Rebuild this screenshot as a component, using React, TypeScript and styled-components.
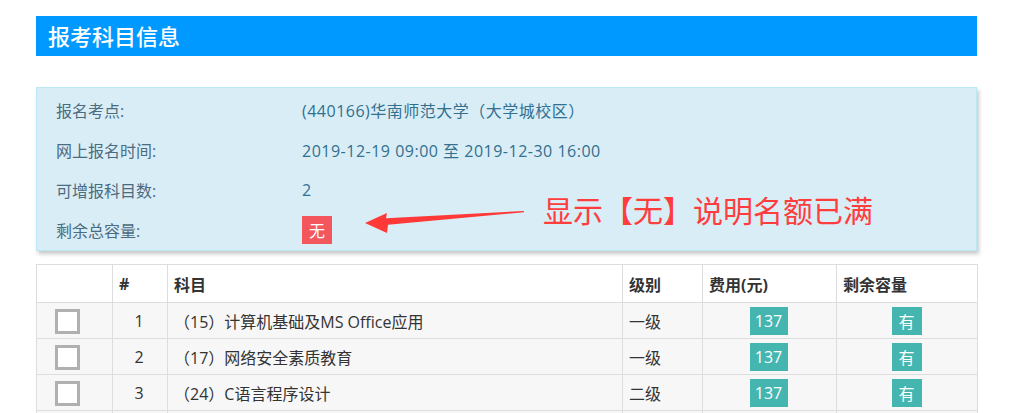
import React from "react";
import styled, { createGlobalStyle } from "styled-components";

const Global = createGlobalStyle`
  html, body { margin: 0; padding: 0; background: #fff; }
  body { font-family: "Open Sans", "Noto Sans CJK SC", sans-serif; color: #333; }
`;

const Page = styled.div`
  width: 941px;
  padding: 16px 0 0 36px;
`;

const TitleBar = styled.div`
  height: 40px;
  line-height: 40px;
  background: #0099ff;
  color: #fff;
  font-size: 22px;
  font-weight: 500;
  padding-left: 12px;
`;

const Panel = styled.div`
  position: relative;
  margin-top: 31px;
  background: #d9edf7;
  border: 1px solid #bce8f1;
  padding: 2px 19px 0 19px;
  height: 160px;
  box-shadow: 2px 3px 4px rgba(0, 0, 0, 0.22);
`;

const InfoRow = styled.div`
  display: grid;
  grid-template-columns: 246px 1fr;
  align-items: center;
  height: 40px;
  font-size: 16px;
`;

const Label = styled.span`
  color: #4b6b80;
`;

const Value = styled.span`
  color: #31708f;
  letter-spacing: 0.5px;
`;

const Badge = styled.span<{ $bg: string; $w: number }>`
  display: inline-flex;
  align-items: center;
  justify-content: center;
  width: ${(p) => p.$w}px;
  height: 28px;
  background: ${(p) => p.$bg};
  color: #fff;
  font-size: 16px;
  vertical-align: middle;
`;

const Note = styled.div`
  position: absolute;
  left: 506px;
  top: 108px;
  font-size: 30px;
  line-height: 30px;
  color: #ff3d3d;
  white-space: nowrap;
`;

const Arrow = styled.svg`
  position: absolute;
  left: 323px;
  top: 117px;
`;

const Table = styled.table`
  margin-top: 13px;
  width: 941px;
  table-layout: fixed;
  border-collapse: collapse;
  font-size: 16px;
`;

const Th = styled.th`
  height: 37px;
  padding: 0 6px;
  border: 1px solid #ddd;
  text-align: left;
  font-weight: bold;
  color: #333;
  background: #fff;
`;

const Tr = styled.tr`
  background: #f7f7f7;
`;

const Td = styled.td<{ $align?: string; $pl?: number; $pr?: number }>`
  height: 35px;
  padding: 0 ${(p) => p.$pr ?? 6}px 0 ${(p) => p.$pl ?? 6}px;
  border: 1px solid #ddd;
  text-align: ${(p) => p.$align ?? "left"};
  vertical-align: middle;
  color: #333;
  white-space: nowrap;
`;

const Check = styled.span`
  display: inline-block;
  box-sizing: border-box;
  width: 25px;
  height: 25px;
  border: 3px solid #b0b0b0;
  background: #fff;
  vertical-align: middle;
  margin-top: 2px;
`;

const rows = [
  { n: 1, name: "（15）计算机基础及MS Office应用", level: "一级" },
  { n: 2, name: "（17）网络安全素质教育", level: "一级" },
  { n: 3, name: "（24）C语言程序设计", level: "二级" },
];

export default function App() {
  return (
    <Page>
      <Global />
      <TitleBar>报考科目信息</TitleBar>
      <Panel>
        <InfoRow>
          <Label>报名考点:</Label>
          <Value>(440166)华南师范大学（大学城校区）</Value>
        </InfoRow>
        <InfoRow>
          <Label>网上报名时间:</Label>
          <Value>2019-12-19 09:00 至 2019-12-30 16:00</Value>
        </InfoRow>
        <InfoRow>
          <Label>可增报科目数:</Label>
          <Value>2</Value>
        </InfoRow>
        <InfoRow>
          <Label>剩余总容量:</Label>
          <span>
            <Badge $bg="#f3565d" $w={30}>无</Badge>
          </span>
        </InfoRow>
        <Arrow width="170" height="35" viewBox="0 0 170 35">
          <polygon
            points="5,18 27,8 26,13.3 164,6 164,7.2 28,19.8 27,28"
            fill="#ff3838"
          />
        </Arrow>
        <Note>显示【无】说明名额已满</Note>
      </Panel>
      <Table>
        <colgroup>
          <col style={{ width: 76 }} />
          <col style={{ width: 55 }} />
          <col style={{ width: 455 }} />
          <col style={{ width: 80 }} />
          <col style={{ width: 134 }} />
          <col style={{ width: 141 }} />
        </colgroup>
        <thead>
          <tr>
            <Th></Th>
            <Th>#</Th>
            <Th>科目</Th>
            <Th>级别</Th>
            <Th>费用(元)</Th>
            <Th>剩余容量</Th>
          </tr>
        </thead>
        <tbody>
          {rows.map((r) => (
            <Tr key={r.n}>
              <Td $pl={18}>
                <Check />
              </Td>
              <Td $align="center" $pr={8}>{r.n}</Td>
              <Td>{r.name}</Td>
              <Td>{r.level}</Td>
              <Td $align="center" $pr={8}>
                <Badge $bg="#45b6af" $w={38}>137</Badge>
              </Td>
              <Td $align="center" $pr={7}>
                <Badge $bg="#45b6af" $w={30}>有</Badge>
              </Td>
            </Tr>
          ))}
          <Tr>
            <Td />
            <Td />
            <Td />
            <Td />
            <Td />
            <Td />
          </Tr>
        </tbody>
      </Table>
    </Page>
  );
}
